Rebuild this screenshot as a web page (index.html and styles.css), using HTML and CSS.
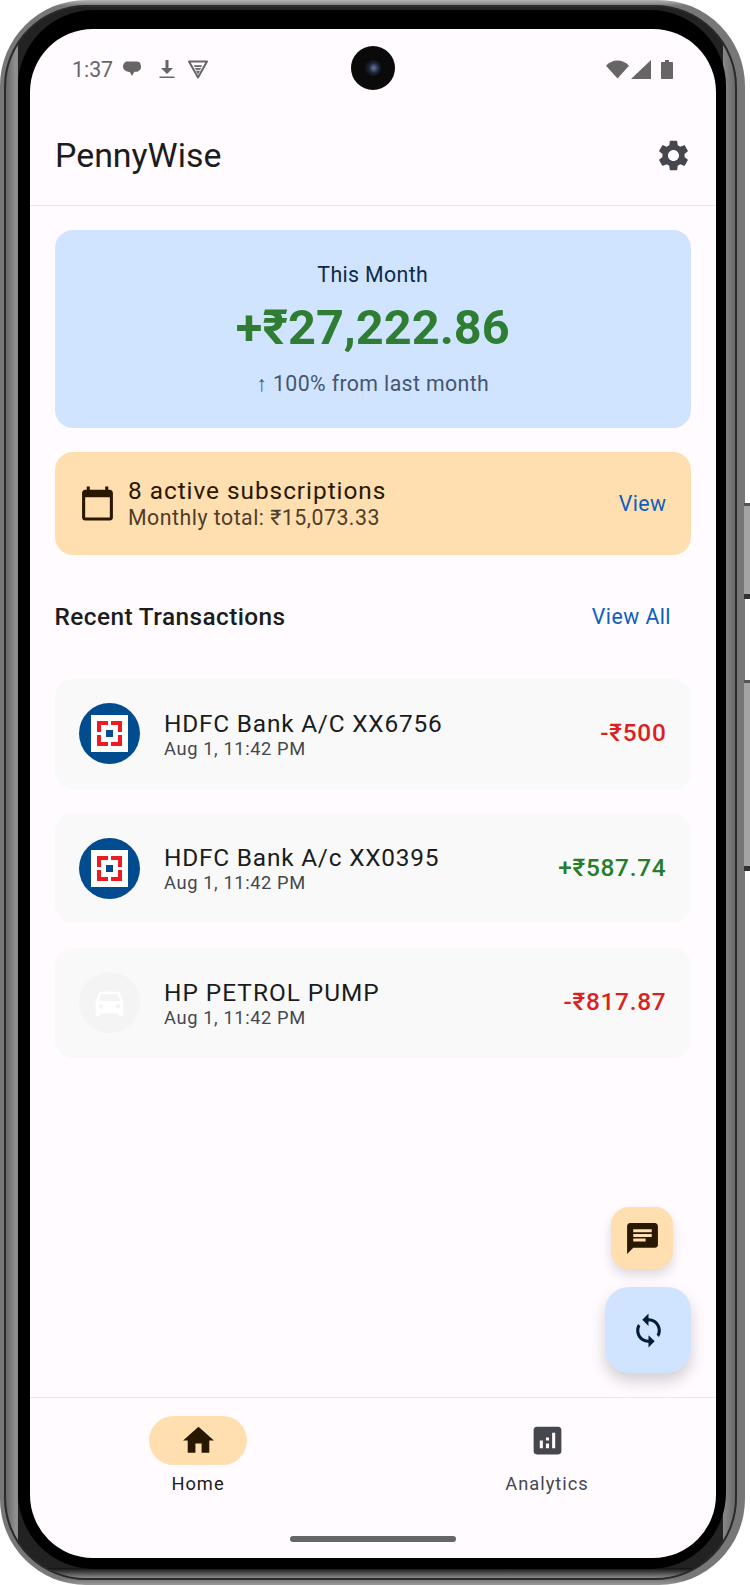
FILE: index.html
```html
<!DOCTYPE html>
<html lang="en">
<head>
    <meta charset="UTF-8">
    <meta name="viewport" content="width=device-width, initial-scale=1.0">
    <title>PennyWise</title>
    <link rel="stylesheet" href="styles.css">
</head>
<body>
    <div class="phone">
        <div class="side-button side-button-top"></div>
        <div class="side-button side-button-bottom"></div>
        <div class="frame-outer">
            <div class="frame-mid">
                <div class="frame-black">
                    <div class="screen">
                        <div class="status-bar">
                            <div class="status-left">
                                <span class="status-time">1:37</span>
                                <svg class="status-icon" viewBox="0 0 20 20" width="20" height="20"><path fill="#666" d="M4 2.500h11c2 0 3.500 1.200 3.500 3 .4.6.5 1.500.5 2.500 0 2.600-2.400 4.800-5 4.800h-1.600L10 17l-2-3.800C4.500 13 1 11 1 7.600 1 5.500 2.200 3.500 4 2.500z"/></svg>
                                <svg class="status-icon status-download" viewBox="0 0 20 20" width="20" height="20"><path fill="#666" d="M8.500 1h3v8H16l-6 6-6-6h4.500zM2.500 17.500h15V19h-15z"/></svg>
                                <svg class="status-icon" viewBox="0 0 22 20" width="22" height="20"><path fill="none" stroke="#666" stroke-width="2" stroke-linejoin="round" d="M2 2.500h18L11 18.500z"/><path fill="#666" d="M7 6.200h8l-.6 1.800H7.600zM8 9h6l-.7 1.800H8.700zM9 11.800h4L11 15.500z"/></svg>
                            </div>
                            <div class="camera"><div class="camera-lens"></div></div>
                            <div class="status-right">
                                <svg viewBox="0 0 24 19" width="23" height="19"><path fill="#666" d="M0 5.500C3 2 7.200 0 12 0s9 2 12 5.500L12 19z"/></svg>
                                <svg class="status-signal" viewBox="0 0 20 19" width="20" height="19"><path fill="#666" d="M20 0v19H0z"/></svg>
                                <svg viewBox="0 0 12 19" width="12" height="19"><path fill="#666" d="M4 0h4v2h3c.6 0 1 .4 1 1v15c0 .6-.4 1-1 1H1c-.6 0-1-.4-1-1V3c0-.6.4-1 1-1h3z"/></svg>
                            </div>
                        </div>

                        <div class="app-bar">
                            <h1 class="app-title">PennyWise</h1>
                            <svg class="settings-icon" viewBox="0 0 24 24" width="37" height="37"><path d="M19.14,12.94c0.04-0.3,0.06-0.61,0.06-0.94c0-0.32-0.02-0.64-0.07-0.94l2.03-1.58c0.18-0.14,0.23-0.41,0.12-0.61 l-1.92-3.32c-0.12-0.22-0.37-0.29-0.59-0.22l-2.39,0.96c-0.5-0.38-1.03-0.7-1.62-0.94L14.4,2.81c-0.04-0.24-0.24-0.41-0.48-0.41 h-3.84c-0.24,0-0.43,0.17-0.47,0.41L9.25,5.35C8.66,5.59,8.12,5.92,7.63,6.29L5.24,5.33c-0.22-0.08-0.47,0-0.59,0.22L2.74,8.87 C2.62,9.08,2.66,9.34,2.86,9.48l2.03,1.58C4.84,11.36,4.8,11.69,4.8,12s0.02,0.64,0.07,0.94l-2.03,1.58 c-0.18,0.14-0.23,0.41-0.12,0.61l1.92,3.32c0.12,0.22,0.37,0.29,0.59,0.22l2.39-0.96c0.5,0.38,1.03,0.7,1.62,0.94l0.36,2.54 c0.05,0.24,0.24,0.41,0.48,0.41h3.84c0.24,0,0.44-0.17,0.47-0.41l0.36-2.54c0.59-0.24,1.13-0.56,1.62-0.94l2.39,0.96 c0.22,0.08,0.47,0,0.59-0.22l1.92-3.32c0.12-0.22,0.07-0.47-0.12-0.61L19.14,12.94z M12,15.6c-1.98,0-3.6-1.62-3.6-3.6 s1.62-3.6,3.6-3.6s3.6,1.62,3.6,3.6S13.98,15.6,12,15.6z"/></svg>
                        </div>

                        <div class="content">
                            <div class="month-card">
                                <div class="month-label">This Month</div>
                                <div class="month-amount">+₹27,222.86</div>
                                <div class="month-change">↑ 100% from last month</div>
                            </div>

                            <div class="subs-card">
                                <svg class="subs-icon" viewBox="0 0 24 24" width="37" height="37"><path d="M20 3h-1V1h-2v2H7V1H5v2H4c-1.100 0-2 .9-2 2v16c0 1.100.9 2 2 2h16c1.100 0 2-.9 2-2V5c0-1.100-.9-2-2-2zm0 18H4V8h16v13z"/></svg>
                                <div class="subs-text">
                                    <div class="subs-title">8 active subscriptions</div>
                                    <div class="subs-total">Monthly total: ₹15,073.33</div>
                                </div>
                                <span class="link">View</span>
                            </div>

                            <div class="section-head">
                                <span class="section-title">Recent Transactions</span>
                                <span class="link">View All</span>
                            </div>

                            <div class="tx-list">
                                <div class="tx-row">
                                    <div class="bank-logo"><div class="bank-square"><div class="bank-mark"><div class="bank-gap-h"></div><div class="bank-gap-v"></div><div class="bank-inner"><div class="bank-dot"></div></div></div></div></div>
                                    <div class="tx-info">
                                        <div class="tx-name">HDFC Bank A/C XX6756</div>
                                        <div class="tx-date">Aug 1, 11:42 PM</div>
                                    </div>
                                    <div class="tx-amount debit">-₹500</div>
                                </div>
                                <div class="tx-row">
                                    <div class="bank-logo"><div class="bank-square"><div class="bank-mark"><div class="bank-gap-h"></div><div class="bank-gap-v"></div><div class="bank-inner"><div class="bank-dot"></div></div></div></div></div>
                                    <div class="tx-info">
                                        <div class="tx-name">HDFC Bank A/c XX0395</div>
                                        <div class="tx-date">Aug 1, 11:42 PM</div>
                                    </div>
                                    <div class="tx-amount credit">+₹587.74</div>
                                </div>
                                <div class="tx-row">
                                    <div class="car-logo">
                                        <svg viewBox="0 0 24 24" width="37" height="37"><path fill="#fff" d="M18.920 6.010C18.720 5.420 18.160 5 17.500 5h-11c-.66 0-1.210.42-1.420 1.010L3 12v8c0 .55.45 1 1 1h1c.55 0 1-.45 1-1v-1h12v1c0 .55.45 1 1 1h1c.55 0 1-.45 1-1v-8l-2.080-5.990zM6.500 16c-.83 0-1.500-.67-1.500-1.500S5.670 13 6.500 13s1.500.67 1.500 1.500S7.330 16 6.500 16zm11 0c-.83 0-1.500-.67-1.500-1.500s.67-1.500 1.500-1.500 1.500.67 1.500 1.500-.67 1.500-1.500 1.500zM5 11l1.500-4.500h11L19 11H5z"/></svg>
                                    </div>
                                    <div class="tx-info">
                                        <div class="tx-name tx-name-caps">HP PETROL PUMP</div>
                                        <div class="tx-date">Aug 1, 11:42 PM</div>
                                    </div>
                                    <div class="tx-amount debit">-₹817.87</div>
                                </div>
                            </div>
                        </div>

                        <div class="fab fab-small">
                            <svg viewBox="0 0 24 24" width="37" height="37"><path fill="#291800" d="M20 2H4c-1.100 0-1.990.9-1.990 2L2 22l4-4h14c1.100 0 2-.9 2-2V4c0-1.100-.9-2-2-2zM6 9h12v2H6V9zm8 5H6v-2h8v2zm4-6H6V6h12v2z"/></svg>
                        </div>
                        <div class="fab fab-large">
                            <svg viewBox="0 0 24 24" width="37" height="37"><path fill="#001d36" d="M12 4V1L8 5l4 4V6c3.310 0 6 2.690 6 6 0 1.010-.25 1.970-.7 2.800l1.460 1.460C19.540 15.030 20 13.570 20 12c0-4.420-3.580-8-8-8zm0 14c-3.310 0-6-2.690-6-6 0-1.010.25-1.970.7-2.800L5.240 7.740C4.460 8.970 4 10.430 4 12c0 4.420 3.580 8 8 8v3l4-4-4-4v3z"/></svg>
                        </div>

                        <div class="bottom-nav">
                            <div class="nav-item">
                                <div class="nav-pill">
                                    <svg viewBox="0 0 24 24" width="37" height="37"><path fill="#291800" d="M10 20v-6h4v6h5v-8h3L12 3 2 12h3v8z"/></svg>
                                </div>
                                <div class="nav-label nav-label-active">Home</div>
                            </div>
                            <div class="nav-item">
                                <div class="nav-pill nav-pill-idle">
                                    <svg viewBox="0 0 24 24" width="37" height="37"><path fill="#46464f" d="M19 3H5c-1.100 0-2 .9-2 2v14c0 1.100.9 2 2 2h14c1.100 0 2-.9 2-2V5c0-1.100-.9-2-2-2zM9 17H7v-5h2v5zm4 0h-2v-3h2v3zm0-5h-2v-2h2v2zm4 5h-2V7h2v10z"/></svg>
                                </div>
                                <div class="nav-label">Analytics</div>
                            </div>
                        </div>
                        <div class="gesture-area"><div class="gesture-bar"></div></div>
                    </div>
                </div>
            </div>
        </div>
    </div>
</body>
</html>
```

FILE: styles.css
```css
* {
    box-sizing: border-box;
}
body {
    margin: 0;
    background-color: #ffffff;
    font-family: Roboto, "Noto Sans", sans-serif;
    color: #1a1c1e;
}
.phone {
    position: relative;
    width: 750px;
    height: 1585px;
    padding-right: 5px;
}
.side-button {
    position: absolute;
    right: 0;
    width: 6px;
    background-color: #a4a4a4;
    border-top: 3px solid #555;
    border-bottom: 5px solid #333;
}
.side-button-top {
    top: 503px;
    height: 96px;
}
.side-button-bottom {
    top: 680px;
    height: 191px;
}

/* device frame */
.frame-outer {
    height: 100%;
    padding: 5px 8px 5px 4px;
    border-radius: 86px;
    background: linear-gradient(to bottom, #b5b5b5, #777 6px, #777 calc(100% - 6px), #999), #777;
}
.frame-mid {
    height: 100%;
    padding: 3px 9px 9px 12px;
    border: 2px solid #2a2a2a;
    border-radius: 82px;
    background:
        linear-gradient(to top, #8a8a8a 0, #101010 10px, transparent 10px),
        linear-gradient(to right, #666, #929292 10px, #888 12px, transparent 12px, transparent calc(100% - 12px), #888 calc(100% - 12px), #6a6a6a),
        #222;
}
.frame-black {
    height: 100%;
    padding: 19px 10px 11px 12px;
    border-radius: 76px;
    background-color: #000;
}
.screen {
    position: relative;
    display: flex;
    flex-direction: column;
    height: 100%;
    overflow: hidden;
    border-radius: 63px;
    background-color: #fffbff;
}

/* status bar */
.status-bar {
    position: relative;
    display: flex;
    justify-content: space-between;
    align-items: center;
    height: 78px;
    padding: 2px 43px 0 42px;
    flex: none;
}
.status-left {
    display: flex;
    align-items: center;
    gap: 4px;
}
.status-time {
    font-size: 21.3px;
    color: #666;
    margin-right: 5px;
}
.status-download {
    margin: 0 6px 0 11px;
}
.status-right {
    display: flex;
    align-items: center;
    gap: 10px;
}
.status-signal {
    margin-left: -8px;
}
.camera {
    position: absolute;
    left: 321px;
    top: 17px;
    width: 44px;
    height: 44px;
    border-radius: 50%;
    background-color: #0a0a0a;
    display: flex;
    align-items: center;
    justify-content: center;
}
.camera-lens {
    width: 16px;
    height: 16px;
    border-radius: 50%;
    background: radial-gradient(circle at 55% 50%, #6a7a9a 0, #1a1f33 45%, #060606 100%);
}

/* app bar */
.app-bar {
    display: flex;
    justify-content: space-between;
    align-items: center;
    height: 99px;
    padding: 0 24px 1px 25px;
    border-bottom: 1px solid #e8e6ea;
    flex: none;
}
.app-title {
    margin: 0;
    font-size: 33.9px;
    font-weight: 400;
    color: #1a1c1e;
}
.settings-icon {
    fill: #46464f;
}

.content {
    flex: 1;
    padding: 24px 25px 0 24.5px;
}
.month-card {
    height: 198px;
    padding-top: 29px;
    border-radius: 18px;
    background-color: #d1e4ff;
    text-align: center;
}
.month-label {
    font-size: 21.3px;
    line-height: 32px;
    letter-spacing: 0.38px;
    color: #0c2a4a;
}
.month-amount {
    margin-top: 5px;
    font-size: 48.7px;
    line-height: 64px;
    font-weight: 700;
    color: #2e7d32;
}
.month-change {
    margin-top: 8px;
    font-size: 21.3px;
    line-height: 32px;
    letter-spacing: 0.38px;
    color: #43566f;
}
.subs-card {
    display: flex;
    align-items: center;
    height: 103px;
    margin-top: 24px;
    padding: 0 24.5px;
    border-radius: 18px;
    background-color: #ffdeb0;
}
.subs-icon {
    fill: #291800;
    margin-right: 12px;
    flex: none;
}
.subs-text {
    flex: 1;
}
.subs-title {
    font-size: 24.4px;
    line-height: 28px;
    letter-spacing: 0.96px;
    color: #291800;
}
.subs-total {
    font-size: 21.3px;
    line-height: 26px;
    letter-spacing: 0.5px;
    color: #4f3d28;
}
.link {
    font-size: 21.3px;
    font-weight: 400;
    letter-spacing: 0.45px;
    color: #0f5fbd;
}
.section-head {
    display: flex;
    justify-content: space-between;
    align-items: center;
    height: 40px;
    margin-top: 41px;
    padding-right: 20px;
}
.section-title {
    font-size: 24.4px;
    font-weight: 500;
    letter-spacing: 0.42px;
    color: #1a1c1e;
}
.tx-list {
    display: flex;
    flex-direction: column;
    gap: 24.5px;
    margin-top: 42.5px;
}
.tx-row {
    display: flex;
    align-items: center;
    height: 110px;
    padding: 0 24.5px;
    border-radius: 18px;
    background-color: #f9f9f9;
}
.bank-logo,
.car-logo {
    display: flex;
    align-items: center;
    justify-content: center;
    width: 61px;
    height: 61px;
    border-radius: 50%;
    flex: none;
}
.bank-logo {
    background-color: #004c8f;
}
.car-logo {
    background-color: #f4f4f4;
}
.bank-square {
    display: flex;
    align-items: center;
    justify-content: center;
    width: 37px;
    height: 37px;
    background-color: #fff;
}
.bank-mark {
    position: relative;
    display: flex;
    align-items: center;
    justify-content: center;
    width: 25px;
    height: 25px;
    background-color: #ed1c24;
}
.bank-gap-h,
.bank-gap-v {
    position: absolute;
    background-color: #fff;
}
.bank-gap-h {
    left: 0;
    top: 11px;
    width: 25px;
    height: 3px;
}
.bank-gap-v {
    left: 11px;
    top: 0;
    width: 3px;
    height: 25px;
}
.bank-inner {
    position: relative;
    display: flex;
    align-items: center;
    justify-content: center;
    width: 17px;
    height: 17px;
    background-color: #fff;
}
.bank-dot {
    width: 7px;
    height: 7px;
    background-color: #004c8f;
}
.tx-info {
    flex: 1;
    margin-left: 24px;
    padding-top: 2px;
}
.tx-name {
    font-size: 24.4px;
    line-height: 28px;
    letter-spacing: 0.8px;
    color: #1a1c1e;
}
.tx-name-caps {
    letter-spacing: 1px;
}
.tx-date {
    font-size: 18.3px;
    line-height: 22px;
    letter-spacing: 0.61px;
    color: #44474e;
}
.tx-amount {
    padding-bottom: 2px;
    font-size: 24.4px;
    font-weight: 500;
    letter-spacing: 0.75px;
}
.debit {
    color: #dc1f1f;
}
.credit {
    color: #267d2c;
}

/* floating buttons */
.fab {
    position: absolute;
    display: flex;
    align-items: center;
    justify-content: center;
}
.fab-small {
    right: 43px;
    top: 1178px;
    width: 62px;
    height: 62px;
    border-radius: 18px;
    background-color: #ffdeb0;
    box-shadow: 0 6px 12px rgba(0, 0, 0, 0.14);
}
.fab-large {
    right: 25px;
    top: 1258px;
    width: 86px;
    height: 86px;
    border-radius: 24px;
    background-color: #d1e4ff;
    box-shadow: 0 8px 16px rgba(0, 0, 0, 0.18);
}

/* bottom navigation */
.bottom-nav {
    display: flex;
    justify-content: space-between;
    height: 120px;
    padding: 18px 109px 0 108px;
    border-top: 1px solid #e8e6ea;
    flex: none;
}
.nav-item {
    display: flex;
    flex-direction: column;
    align-items: center;
    width: 120px;
}
.nav-pill {
    display: flex;
    align-items: center;
    justify-content: center;
    width: 98px;
    height: 49px;
    border-radius: 25px;
    background-color: #ffdeb0;
}
.nav-pill-idle {
    background-color: transparent;
}
.nav-label {
    margin-top: 7px;
    font-size: 18.3px;
    line-height: 24px;
    font-weight: 400;
    letter-spacing: 1px;
    color: #44474e;
}
.nav-label-active {
    color: #1a1c1e;
}
.gesture-area {
    display: flex;
    justify-content: center;
    height: 41px;
    padding-top: 19px;
    flex: none;
}
.gesture-bar {
    width: 166px;
    height: 6px;
    border-radius: 3px;
    background-color: #666;
}
```
